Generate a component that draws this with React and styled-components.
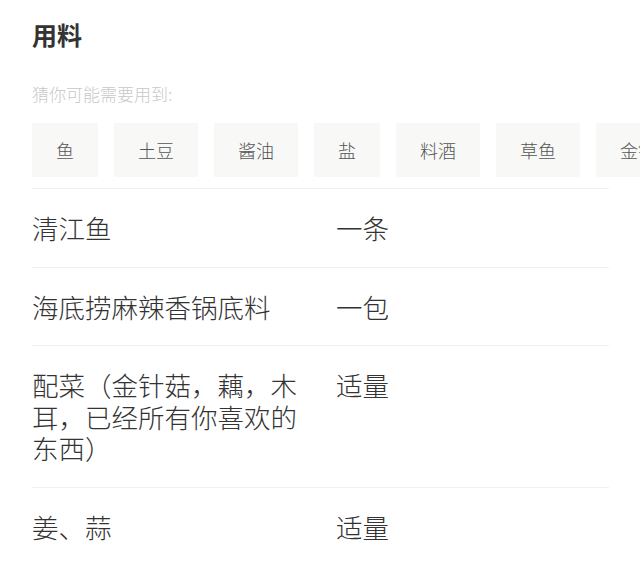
import React from "react";
import styled, { createGlobalStyle } from "styled-components";

const GlobalStyle = createGlobalStyle`
  html, body {
    margin: 0;
    padding: 0;
    background: #ffffff;
  }
  body {
    font-family: "Noto Sans CJK SC", "Noto Sans", sans-serif;
    color: #333333;
  }
`;

const suggestions = ["鱼", "土豆", "酱油", "盐", "料酒", "草鱼", "金针菇", "豆腐"];

const ingredients = [
  { name: "清江鱼", amount: "一条" },
  { name: "海底捞麻辣香锅底料", amount: "一包" },
  { name: "配菜（金针菇，藕，木耳，已经所有你喜欢的东西）", amount: "适量" },
  { name: "姜、蒜", amount: "适量" },
];

function App() {
  return (
    <>
      <GlobalStyle />
      <Page>
        <Title>用料</Title>
        <Hint>猜你可能需要用到:</Hint>
        <ChipScroller>
          {suggestions.map((s) => (
            <Chip key={s}>{s}</Chip>
          ))}
        </ChipScroller>
        <List>
          {ingredients.map((item) => (
            <Row key={item.name}>
              <Name>{item.name}</Name>
              <Amount>{item.amount}</Amount>
            </Row>
          ))}
        </List>
      </Page>
    </>
  );
}

export default App;

const Page = styled.div`
  padding: 17px 31px 0 32px;
  overflow: hidden;
`;

const Title = styled.h2`
  margin: 0;
  font-size: 25px;
  line-height: 34px;
  font-weight: 600;
  color: #333333;
`;

const Hint = styled.div`
  margin-top: 31px;
  font-size: 17px;
  line-height: 24px;
  font-weight: 300;
  color: #c8c8c8;
`;

const ChipScroller = styled.div`
  display: flex;
  gap: 16px;
  margin-top: 17px;
  margin-right: -31px;
  overflow: hidden;
  white-space: nowrap;
`;

const Chip = styled.div`
  flex: none;
  height: 54px;
  padding: 0 24px;
  display: flex;
  align-items: center;
  background: #f8f8f6;
  font-size: 18px;
  font-weight: 300;
  color: #555555;
`;

const List = styled.div`
  margin-top: 11px;
  border-top: 1px solid #f0f0f0;
`;

const Row = styled.div`
  display: grid;
  grid-template-columns: 274px 1fr;
  column-gap: 30px;
  padding: 23px 0;
  border-bottom: 1px solid #f0f0f0;
  font-size: 26.5px;
  line-height: 31.5px;
  font-weight: 300;
  color: #333333;
`;

const Name = styled.div``;

const Amount = styled.div``;
